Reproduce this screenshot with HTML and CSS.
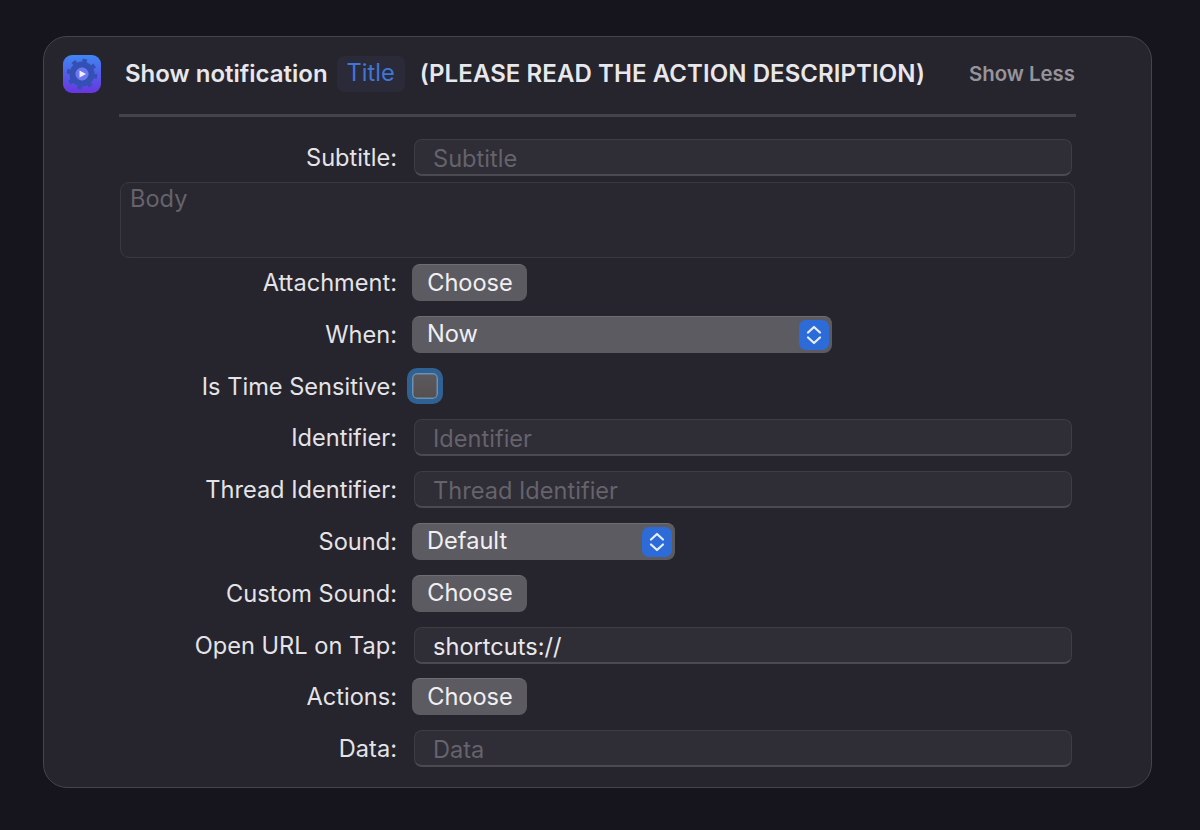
FILE: index.html
```html
<!DOCTYPE html>
<html lang="en">
<head>
    <meta charset="UTF-8" />
    <title>Show notification</title>
    <link rel="stylesheet" href="styles.css">
</head>
<body>
    <div class="card">
        <!-- Action header -->
        <header class="action-head">
            <svg class="app-icon" width="38" height="38" viewBox="0 0 38 38">
                <defs>
                    <linearGradient id="icon-bg" x1="0" y1="0" x2="0" y2="1">
                        <stop offset="0" stop-color="#3f86f2" />
                        <stop offset="1" stop-color="#6a35e0" />
                    </linearGradient>
                </defs>
                <rect width="38" height="38" rx="9" fill="url(#icon-bg)" />
                <circle cx="19" cy="19" r="9.5" fill="none" stroke="#3350b4" stroke-width="6" />
                <circle cx="19" cy="19" r="13.500" fill="none" stroke="#3350b4" stroke-width="3.500" stroke-dasharray="4.500 6.100" />
                <circle cx="19" cy="19" r="6.500" fill="#6d78f0" />
                <path d="M16.500 15.500 L23 19 L16.500 22.500 Z" fill="#f1efff" />
            </svg>
            <span class="action-name">Show notification</span>
            <span class="token">Title</span>
            <span class="action-name action-note">(PLEASE READ THE ACTION DESCRIPTION)</span>
            <span class="show-less">Show Less</span>
        </header>

        <div class="divider"></div>

        <!-- Parameters -->
        <div class="form">
            <div class="row">
                <label>Subtitle:</label>
                <div class="field placeholder">Subtitle</div>
            </div>
            <div class="field-body placeholder">Body</div>
            <div class="row">
                <label>Attachment:</label>
                <button class="btn">Choose</button>
            </div>
            <div class="row row-gap">
                <label>When:</label>
                <div class="select select-wide">
                    <span>Now</span>
                    <span class="stepper">
                        <svg width="16" height="22" viewBox="0 0 16 22"><path d="M2 8.500 L8 3 L14 8.500 M2 13.500 L8 19 L14 13.500" fill="none" stroke="#e6effc" stroke-width="2.200" stroke-linecap="round" stroke-linejoin="round" /></svg>
                    </span>
                </div>
            </div>
            <div class="row row-gap">
                <label>Is Time Sensitive:</label>
                <span class="checkbox"></span>
            </div>
            <div class="row row-gap">
                <label>Identifier:</label>
                <div class="field placeholder">Identifier</div>
            </div>
            <div class="row row-gap">
                <label>Thread Identifier:</label>
                <div class="field placeholder">Thread Identifier</div>
            </div>
            <div class="row row-gap">
                <label>Sound:</label>
                <div class="select select-narrow">
                    <span>Default</span>
                    <span class="stepper">
                        <svg width="16" height="22" viewBox="0 0 16 22"><path d="M2 8.500 L8 3 L14 8.500 M2 13.500 L8 19 L14 13.500" fill="none" stroke="#e6effc" stroke-width="2.200" stroke-linecap="round" stroke-linejoin="round" /></svg>
                    </span>
                </div>
            </div>
            <div class="row row-gap">
                <label>Custom Sound:</label>
                <button class="btn">Choose</button>
            </div>
            <div class="row row-gap">
                <label>Open URL on Tap:</label>
                <div class="field">shortcuts://</div>
            </div>
            <div class="row row-gap">
                <label>Actions:</label>
                <button class="btn">Choose</button>
            </div>
            <div class="row row-gap">
                <label>Data:</label>
                <div class="field placeholder">Data</div>
            </div>
        </div>
    </div>
</body>
</html>
```

FILE: styles.css
```css
/* === Base === */
body {
    margin: 0;
    height: 830px;
    overflow: hidden;
    background: #16141d;
    color: #e9e8ec;
    font-family: Inter, "Liberation Sans", sans-serif;
    font-size: 23.600px;
}

/* === Card === */
.card {
    box-sizing: border-box;
    width: 1109px;
    height: 752px;
    margin: 36px 0 0 43px;
    padding: 18px 75px 0 19px;
    background: #26242c;
    border: 1.500px solid #45434c;
    border-radius: 24px;
}

/* === Header === */
.action-head {
    display: flex;
    align-items: center;
    height: 38px;
}

.app-icon {
    flex: none;
    margin-right: 24px;
}

.action-name {
    padding-bottom: 2px;
    font-size: 24px;
    font-weight: 600;
    color: #e8e7eb;
    white-space: nowrap;
}

.action-note {
    letter-spacing: 0.080px;
}

.token {
    margin: 0 15px 0 9px;
    padding: 0 10px;
    height: 36px;
    line-height: 34px;
    border-radius: 7px;
    background: #2a2a39;
    color: #3f76d8;
}

.show-less {
    margin: 0 1px 0 auto;
    padding-bottom: 2px;
    font-size: 20.400px;
    font-weight: 600;
    color: #96949b;
}

.divider {
    height: 3px;
    margin: 21px 0 22px 56px;
    background: #44424b;
}

/* === Form rows === */
.form {
    display: flex;
    flex-direction: column;
    gap: 6px;
    margin-left: 56px;
}

.row {
    display: grid;
    grid-template-columns: 278px 1fr;
    column-gap: 15px;
    align-items: center;
    height: 37px;
}

.row-gap {
    margin-top: 8.800px;
}

.row label {
    text-align: right;
    color: #e4e3e7;
    white-space: nowrap;
}

.field {
    box-sizing: border-box;
    height: 37px;
    margin: 0 4px 0 2px;
    padding: 0 18px;
    line-height: 37px;
    background: #2f2d36;
    border: 1px solid #3e3c45;
    border-bottom: 2px solid #4b4952;
    border-radius: 8px;
    color: #e9e8ec;
}

.field-body {
    box-sizing: border-box;
    height: 76px;
    margin: 0 1px;
    padding: 1px 9px;
    background: #292730;
    border: 1px solid #3a3841;
    border-radius: 9px;
}

.field.placeholder,
.placeholder {
    color: #65636b;
}

/* === Controls === */
.btn {
    justify-self: start;
    box-sizing: border-box;
    width: 115px;
    height: 37px;
    padding: 0 0 2px 1px;
    border: none;
    border-top: 1px solid #6f6d74;
    border-radius: 8px;
    background: #5d5b62;
    color: #f0eff2;
    font-family: inherit;
    font-size: 23.600px;
}

.select {
    display: flex;
    align-items: center;
    justify-content: space-between;
    box-sizing: border-box;
    height: 37px;
    padding: 0 3px 2px 15px;
    border-top: 1px solid #6f6d74;
    border-radius: 8px;
    background: #5d5b62;
    color: #f0eff2;
}

.select-wide {
    width: 420px;
}

.select-narrow {
    width: 263px;
}

.stepper {
    display: flex;
    align-items: center;
    justify-content: center;
    width: 30px;
    height: 30px;
    margin-top: 2px;
    border-radius: 7px;
    background: #2c6bd8;
}

.checkbox {
    box-sizing: border-box;
    width: 36px;
    height: 36px;
    margin-left: -5px;
    border: 5px solid #2f6193;
    border-radius: 10px;
    background: linear-gradient(#5c5a60, #55504f);
    box-shadow: inset 0 0 0 1.500px #6d8fb0;
}
```
